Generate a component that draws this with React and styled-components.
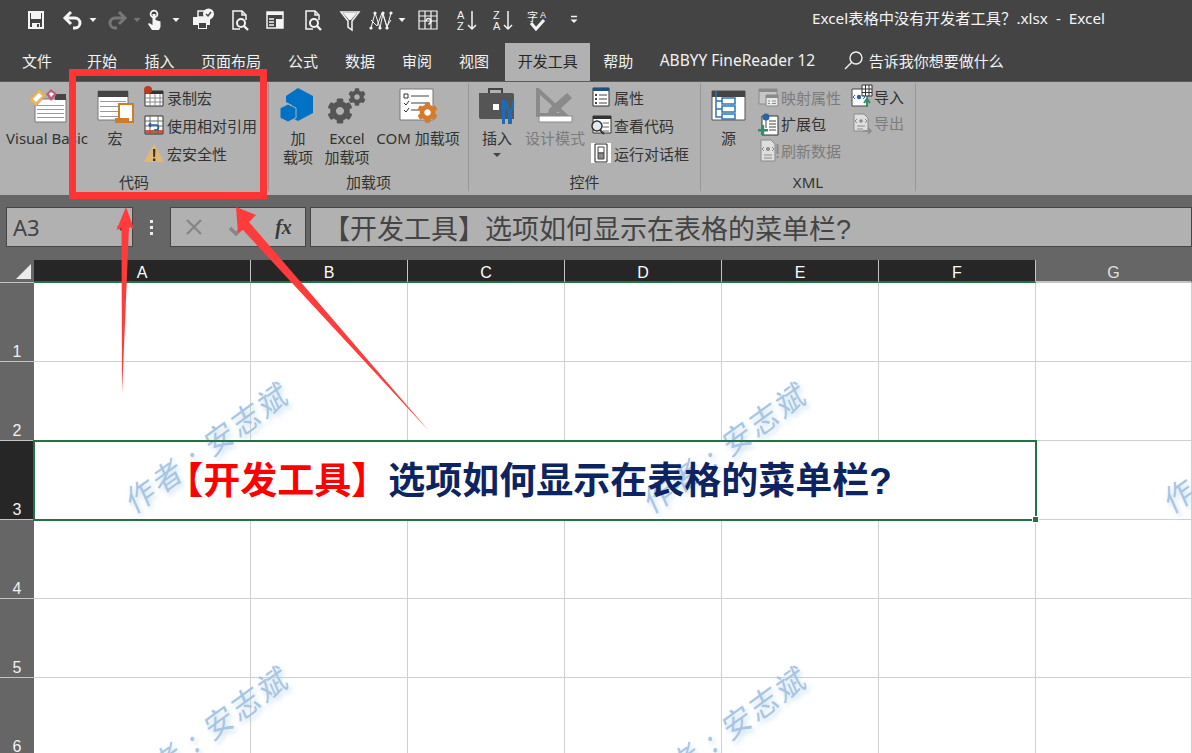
import React from 'react'
import styled, { createGlobalStyle } from 'styled-components'
import { FaCog } from 'react-icons/fa'

const GlobalStyle = createGlobalStyle`
  html, body { margin: 0; padding: 0; background: #fff; }
  body { font-family: "Noto Sans", "Noto Sans CJK SC", sans-serif; }
`

const Page = styled.div`
  position: relative;
  width: 1192px;
  height: 753px;
  overflow: hidden;
  display: flex;
  flex-direction: column;
`

/* ---------- title bar ---------- */
const TitleBar = styled.div`
  height: 43px;
  flex: none;
  box-sizing: border-box;
  background: #444;
  display: flex;
  align-items: center;
  padding: 0 0 3px 24px;
  color: #f2f2f2;
`
const QatIcon = styled.svg`
  flex: none;
  width: ${p => p.$w || 24}px;
  height: 24px;
  margin-left: ${p => p.$ml || 0}px;
  color: ${p => p.$off ? '#777' : '#f4f4f4'};
  fill: none;
  stroke: currentColor;
  stroke-width: 1.5;
`
const Title = styled.div`
  margin-left: auto;
  padding: 0 87px 6px 0;
  font-size: 15.3px;
  white-space: pre;
  color: #f4f4f4;
`

const Caret = ({ ml, off }) => (
  <QatIcon $w={10} $ml={ml} $off={off} viewBox="0 0 10 24">
    <path d="M1.5 10h7L5 14z" fill="currentColor" stroke="none" />
  </QatIcon>
)

const DocSearch = ({ ml }) => (
  <QatIcon $ml={ml} viewBox="0 0 24 24">
    <path d="M12 21H5V3h9l4 4v5" />
    <path d="M14 3v4h4" />
    <circle cx="13" cy="15" r="4" strokeWidth="2" />
    <path d="M16 18l4 4" strokeWidth="2.4" />
  </QatIcon>
)

const QuickAccess = () => (
  <>
    <QatIcon viewBox="0 0 24 24">
      <path d="M5 4h14v16H5z" strokeWidth="2" />
      <path d="M7 4h10v7H7zM8 15h8v5H8z" fill="currentColor" stroke="none" />
      <path d="M13 16h2v3h-2z" fill="#444" stroke="none" />
    </QatIcon>
    <QatIcon $ml={13} viewBox="0 0 24 24">
      <path d="M10 4L4 10l6 6M4 10h10a5 5 0 0 1 0 10h-2" strokeWidth="3" />
    </QatIcon>
    <Caret ml={3} />
    <QatIcon $ml={7} $off viewBox="0 0 24 24">
      <path d="M14 4l6 6-6 6M20 10H10a5 5 0 0 0 0 10h2" strokeWidth="3" />
    </QatIcon>
    <Caret ml={3} off />
    <QatIcon $ml={1} viewBox="0 0 24 24">
      <circle cx="11" cy="6" r="3.4" strokeWidth="1.8" />
      <path d="M9.5 6h3v6l5 1.5V19l-1.5 3H9l-4-6 1-1 3.5 2z" fill="currentColor" stroke="none" />
    </QatIcon>
    <Caret ml={4} />
    <QatIcon $ml={10} viewBox="0 0 24 24">
      <path d="M7 3h7v6H7z" />
      <path d="M2 9h17v8h-3v4H7v-4H2z" fill="currentColor" stroke="none" />
      <path d="M8 15h7v5H8z" fill="#444" stroke="none" />
      <circle cx="17.5" cy="6" r="5.5" fill="currentColor" stroke="none" />
      <path d="M15 6l2 2 3-4" stroke="#444" strokeWidth="1.4" />
    </QatIcon>
    <DocSearch ml={13} />
    <QatIcon $ml={11} viewBox="0 0 24 24">
      <path d="M4 4h16v16H4z" />
      <path d="M4 4h16v3H4z" fill="currentColor" stroke="none" />
      <path d="M6 11h5M6 14h5M6 17h5" />
      <path d="M13 11h7v9h-7z" fill="currentColor" stroke="none" />
    </QatIcon>
    <DocSearch ml={14} />
    <QatIcon $ml={13} viewBox="0 0 24 24">
      <path d="M3 4h18l-7 9v9l-4-3v-6z" />
      <path d="M5 5h14l-6 7h-2z" fill="currentColor" stroke="none" />
    </QatIcon>
    <QatIcon $ml={7} viewBox="0 0 24 24">
      <path d="M2 20L6 5l5 15 3-15 4 15 4-15M2 12l6 6 5-13 5 13 4-6" strokeWidth="1" />
      <g fill="currentColor" stroke="none">
        <circle cx="6" cy="5" r="1.6" /><circle cx="14" cy="5" r="1.6" /><circle cx="22" cy="5" r="1.6" />
        <circle cx="2" cy="20" r="1.6" /><circle cx="11" cy="20" r="1.6" /><circle cx="18" cy="20" r="1.6" />
      </g>
    </QatIcon>
    <Caret ml={4} />
    <QatIcon $ml={9} viewBox="0 0 24 24">
      <path d="M3 3h18v18H3zM3 8h18M3 13h18M9 3v18M15 3v18" strokeWidth="1.2" />
      <path d="M10 13a2.5 2.5 0 1 1 4 2l-1.5 1.5" strokeWidth="1.6" />
    </QatIcon>
    <QatIcon $ml={14} viewBox="0 0 24 24">
      <text x="3" y="11" fontSize="11" fontFamily="Liberation Sans" fill="currentColor" stroke="none">A</text>
      <text x="3" y="22" fontSize="11" fontFamily="Liberation Sans" fill="currentColor" stroke="none">Z</text>
      <path d="M18 3v18M14 17l4 4 4-4" />
    </QatIcon>
    <QatIcon $ml={12} viewBox="0 0 24 24">
      <text x="3" y="11" fontSize="11" fontFamily="Liberation Sans" fill="currentColor" stroke="none">Z</text>
      <text x="3" y="22" fontSize="11" fontFamily="Liberation Sans" fill="currentColor" stroke="none">A</text>
      <path d="M18 3v18M14 17l4 4 4-4" />
    </QatIcon>
    <QatIcon $ml={12} viewBox="0 0 24 24">
      <text x="1" y="13" fontSize="11" fontFamily="Noto Sans CJK SC" fill="currentColor" stroke="none">字</text>
      <text x="14" y="10" fontSize="9" fontFamily="Liberation Sans" fill="currentColor" stroke="none">A</text>
      <path d="M5 15l5 6 8-9" strokeWidth="3" />
    </QatIcon>
    <QatIcon $w={10} $ml={19} viewBox="0 0 10 24">
      <path d="M2 8.5h6" />
      <path d="M1.5 11.5h7L5 15z" fill="currentColor" stroke="none" />
    </QatIcon>
  </>
)

/* ---------- tabs ---------- */
const TabBar = styled.div`
  height: 38px;
  flex: none;
  box-sizing: border-box;
  background: #444;
  display: flex;
  align-items: stretch;
  padding-left: 8px;
  font-size: 15px;
  color: #f2f2f2;
`
const Tab = styled.div`
  display: flex;
  align-items: center;
  white-space: nowrap;
  padding: 0 ${p => p.$pad ?? 13.5}px 4px;
  margin-right: ${p => p.$mr || 0}px;
  font-size: ${p => p.$fs || 15}px;
  background: ${p => p.$active ? '#b1b1b1' : 'transparent'};
  color: ${p => p.$active ? '#262626' : 'inherit'};
`
const TellMe = styled.div`
  display: flex;
  align-items: center;
  gap: 3px;
  margin-left: 13px;
  padding-bottom: 4px;
  font-size: 15px;
`

/* ---------- ribbon ---------- */
const Ribbon = styled.div`
  height: 114px;
  flex: none;
  box-sizing: border-box;
  background: #b1b1b1;
  border-top: 1px solid #5a5a5a;
  padding: 1px 0 4px;
  display: flex;
  align-items: stretch;
  color: #333;
  font-size: 15px;
`
const Group = styled.div`
  box-sizing: border-box;
  width: ${p => p.$w}px;
  flex: none;
  border-right: 1px solid #969696;
  display: flex;
  flex-direction: column;
`
const GroupBody = styled.div`
  height: 90px;
  display: flex;
  align-items: flex-start;
  padding-left: ${p => p.$pl || 0}px;
`
const GroupLabel = styled.div`
  height: 18px;
  line-height: 18px;
  text-align: center;
  white-space: nowrap;
`
const LargeBtn = styled.div`
  flex: none;
  width: ${p => p.$w}px;
  display: flex;
  flex-direction: column;
  align-items: center;
  color: ${p => p.$off ? '#7c7c7c' : 'inherit'};
`
const LargeIcon = styled.div`
  height: 46px;
  display: flex;
  align-items: center;
  justify-content: center;
  position: relative;
`
const LargeText = styled.div`
  line-height: 19px;
  text-align: center;
  white-space: nowrap;
`
const SmallCol = styled.div`
  flex: none;
  display: flex;
  flex-direction: column;
  margin-left: ${p => p.$ml || 0}px;
  margin-top: ${p => p.$mt || 0}px;
`
const SmallBtn = styled.div`
  height: ${p => p.$h || 28}px;
  display: flex;
  align-items: center;
  white-space: nowrap;
  color: ${p => p.$off ? '#7c7c7c' : 'inherit'};
`
const SmallIcon = styled.svg`
  flex: none;
  width: 24px;
  height: 24px;
  margin-right: 1px;
`
const BigSvg = styled.svg`
  display: block;
  width: ${p => p.$w || 40}px;
  height: ${p => p.$h || 36}px;
`
const GearStack = styled.div`
  position: relative;
  width: 40px;
  height: 36px;
  color: #555;
`
const Gear = styled(FaCog)`
  position: absolute;
  left: ${p => p.$x}px;
  top: ${p => p.$y}px;
  font-size: ${p => p.$s}px;
  color: ${p => p.$c || 'inherit'};
`
const DropCaret = styled.div`
  width: 0;
  height: 0;
  margin-top: 5px;
  border: 4px solid transparent;
  border-top: 4px solid #444;
  border-bottom: 0;
`

const SheetLines = ({ x, y, w, n = 4, gap = 5 }) => (
  <g stroke="#999" strokeWidth="1">
    {Array.from({ length: n }).map((_, i) => (
      <path key={i} d={`M${x} ${y + i * gap + 0.5}h${w}`} />
    ))}
  </g>
)

/* ---------- formula bar ---------- */
const FormulaRow = styled.div`
  height: 65px;
  flex: none;
  background: #666;
  display: flex;
  align-items: flex-start;
  padding: 12px 0 0 6px;
  box-sizing: border-box;
`
const FieldBox = styled.div`
  box-sizing: border-box;
  height: 40px;
  background: #b1b1b1;
  border: 1px solid #464646;
  color: #444;
  display: flex;
  align-items: center;
  position: relative;
  flex: ${p => p.$grow ? '1' : 'none'};
  width: ${p => p.$w ? p.$w + 'px' : 'auto'};
  margin-left: ${p => p.$ml || 0}px;
`
const NameText = styled.span`
  font-size: 22px;
  margin-left: 6px;
`
const NameCaret = styled.div`
  position: absolute;
  right: 7px;
  top: 18px;
  border: 4px solid transparent;
  border-top: 5px solid #444;
  border-bottom: 0;
`
const Dots = styled.div`
  flex: none;
  width: 37px;
  height: 40px;
  display: flex;
  flex-direction: column;
  align-items: center;
  justify-content: center;
  gap: 3px;
  & > i {
    display: block;
    width: 3px;
    height: 3px;
    background: #eee;
  }
`
const FxSlot = styled.div`
  flex: none;
  width: 45px;
  display: flex;
  justify-content: center;
  align-items: center;
  color: #3a3a3a;
  font-family: "Liberation Serif", serif;
  font-style: italic;
  font-weight: 700;
  font-size: 20px;
`
const FormulaText = styled.div`
  margin-left: 12px;
  font-family: "Liberation Sans", "Noto Sans CJK SC", sans-serif;
  font-size: 27px;
  white-space: nowrap;
`

/* ---------- sheet ---------- */
const Sheet = styled.div`
  flex: none;
  display: grid;
  grid-template-columns: 34px 217px repeat(5, 157px) 156px;
  grid-template-rows: 23px repeat(6, 79px);
  font-family: "Liberation Sans", sans-serif;
  position: relative;
`
const Corner = styled.div`
  background: #666;
  border-bottom: 1px solid #c4c4c4;
  display: flex;
  align-items: flex-end;
  justify-content: flex-end;
  padding: 0 3px 3px 0;
  & > i {
    display: block;
    width: 0;
    height: 0;
    border-style: solid;
    border-width: 0 0 15px 15px;
    border-color: transparent transparent #ececec transparent;
  }
`
const ColHead = styled.div`
  box-sizing: border-box;
  background: ${p => p.$sel ? '#262626' : '#666'};
  color: ${p => p.$sel ? '#fff' : '#e0e0e0'};
  border-right: 1px solid ${p => p.$sel ? '#c4c4c4' : '#666'};
  border-bottom: 2px solid ${p => p.$sel ? '#217346' : '#c4c4c4'};
  font-size: 16px;
  line-height: 25px;
  text-align: center;
`
const RowHead = styled.div`
  box-sizing: border-box;
  background: ${p => p.$sel ? '#262626' : '#666'};
  border-bottom: 1px solid #c4c4c4;
  color: #f2f2f2;
  font-size: 16px;
  display: flex;
  align-items: flex-end;
  justify-content: center;
`
const Cell = styled.div`
  box-sizing: border-box;
  border-right: 1px solid #d0d0d0;
  border-bottom: 1px solid #d0d0d0;
  background: #fff;
`
const MergedCell = styled.div`
  grid-column: span 6;
  position: relative;
  z-index: 2;
  outline: 2px solid #217346;
  outline-offset: -1px;
  display: flex;
  align-items: center;
  justify-content: center;
  font-family: "Liberation Sans", "Noto Sans CJK SC", sans-serif;
  font-weight: 700;
  font-size: 37px;
  color: #0c2461;
  white-space: nowrap;
  padding: 0 12px 6px 0;
  box-sizing: border-box;
  &::after {
    content: '';
    position: absolute;
    right: -3px;
    bottom: -3px;
    width: 5px;
    height: 5px;
    background: #217346;
    border: 1px solid #fff;
  }
`
const RedText = styled.span`
  color: #f00;
`
const Watermark = styled.div`
  position: absolute;
  left: ${p => p.$x}px;
  top: ${p => p.$y}px;
  transform: translate(-50%, -50%) rotate(-36deg) skewX(-12deg);
  z-index: 1;
  font-family: "Noto Sans CJK SC", sans-serif;
  font-size: 30px;
  letter-spacing: 3px;
  white-space: pre;
  color: #a6c6e4;
  text-shadow: 1px 4px 5px rgba(170, 200, 230, 0.6);
`

/* ---------- annotations over the picture ---------- */
const RedFrame = styled.div`
  position: absolute;
  left: 69px;
  top: 69px;
  width: 198px;
  height: 130px;
  box-sizing: border-box;
  border: 7px solid #ff3535;
`
const Arrows = styled.svg`
  position: absolute;
  left: 0;
  top: 0;
  width: 1192px;
  height: 753px;
  z-index: 3;
  pointer-events: none;
`

const columns = ['A', 'B', 'C', 'D', 'E', 'F']
const rows = [1, 2, 3, 4, 5, 6]
const marks = [[207, 185], [725, 185], [1245, 185], [207, 469], [725, 469]]

export default function App() {
  return (
    <Page>
      <GlobalStyle />
      <TitleBar>
        <QuickAccess />
        <Title>Excel表格中没有开发者工具？.xlsx  -  Excel</Title>
      </TitleBar>

      <TabBar>
        <Tab $pad={14} $mr={7}>文件</Tab>
        <Tab $pad={14} $mr={-0.5}>开始</Tab>
        <Tab $pad={14} $mr={-1}>插入</Tab>
        <Tab>页面布局</Tab>
        <Tab>公式</Tab>
        <Tab>数据</Tab>
        <Tab>审阅</Tab>
        <Tab $mr={2.5}>视图</Tab>
        <Tab $active $pad={12.5}>开发工具</Tab>
        <Tab $pad={13}>帮助</Tab>
        <Tab $fs={15.5}>ABBYY FineReader 12</Tab>
        <TellMe>
          <svg width="24" height="24" viewBox="0 0 24 24" fill="none" stroke="#f2f2f2" strokeWidth="1.4">
            <circle cx="14" cy="10" r="6" />
            <path d="M9.5 14.5L3 21" />
          </svg>
          告诉我你想要做什么
        </TellMe>
      </TabBar>

      <Ribbon>
        <Group $w={269}>
          <GroupBody>
            <LargeBtn $w={94}>
              <LargeIcon>
                <BigSvg viewBox="0 0 40 36">
                  <path d="M8 15h31v23H8z" transform="translate(0,-4)" fill="#fff" stroke="#777" />
                  <path d="M28 6h11v6H28z" fill="#444" />
                  <SheetLines x={10} y={17} w={27} n={4} gap={4} />
                  <path d="M2 12L12 1l7 6-10 11z" fill="#e2b96a" stroke="#d9a64e" />
                  <path d="M6 11l6-6 3 3-6 6z" fill="#fff" />
                  <path d="M19 6l5-5 6 5-6 7z" fill="#c45c76" />
                  <path d="M22 6l2-2 3 2-3 3z" fill="#fff" />
                </BigSvg>
              </LargeIcon>
              <LargeText>Visual Basic</LargeText>
            </LargeBtn>
            <LargeBtn $w={42}>
              <LargeIcon>
                <BigSvg viewBox="0 0 40 36">
                  <path d="M3 3h30v29H3z" fill="#fff" stroke="#777" />
                  <path d="M3 3h30v6H3z" fill="#444" />
                  <SheetLines x={5} y={13} w={26} n={4} gap={5} />
                  <path d="M24 16h14v18H24z" fill="#fff" stroke="#d07a2c" strokeWidth="2" />
                  <path d="M20 30h14v5H20z" fill="#d07a2c" />
                </BigSvg>
              </LargeIcon>
              <LargeText>宏</LargeText>
            </LargeBtn>
            <SmallCol $ml={6}>
              <SmallBtn>
                <SmallIcon viewBox="0 0 24 24">
                  <path d="M3 6h18v15H3z" fill="#fff" stroke="#333" />
                  <path d="M3 6h18v3H3z" fill="#333" />
                  <path d="M3 13h18M3 17h18M8 9v12M13 9v12M18 9v12" stroke="#888" />
                  <circle cx="6" cy="5" r="4" fill="#c0391b" />
                </SmallIcon>
                录制宏
              </SmallBtn>
              <SmallBtn>
                <SmallIcon viewBox="0 0 24 24">
                  <path d="M3 3h18v18H3z" fill="#fff" stroke="#333" />
                  <path d="M3 8h18M3 13h18M8 3v18M16 3v18" stroke="#666" />
                  <path d="M3 17h18v4H3z" fill="#b5402a" opacity=".85" />
                  <path d="M9 10l-2 2 2 2M7 12h7a2 2 0 0 1 0 5h-2" fill="none" stroke="#1d5fa8" strokeWidth="1.5" />
                </SmallIcon>
                使用相对引用
              </SmallBtn>
              <SmallBtn>
                <SmallIcon viewBox="0 0 24 24">
                  <path d="M12 3l10 18H2z" fill="#e3b771" />
                  <path d="M11 8h2.4l-.3 8h-1.8zM11 17.5h2.4V20H11z" fill="#333" />
                </SmallIcon>
                宏安全性
              </SmallBtn>
            </SmallCol>
          </GroupBody>
          <GroupLabel>代码</GroupLabel>
        </Group>

        <Group $w={200}>
          <GroupBody $pl={6}>
            <LargeBtn $w={46}>
              <LargeIcon>
                <BigSvg viewBox="0 0 40 36">
                  <path d="M20 0l15 8v17l-15 8-6-3V17l-6-3V8z" fill="#0072c6" />
                  <path d="M10 16l8 4v10l-8 4-8-4V20z" fill="#0072c6" stroke="#b1b1b1" />
                </BigSvg>
              </LargeIcon>
              <LargeText>加<br />载项</LargeText>
            </LargeBtn>
            <LargeBtn $w={52}>
              <LargeIcon>
                <GearStack>
                  <Gear $x={0} $y={10} $s={26} />
                  <Gear $x={21} $y={0} $s={18} />
                </GearStack>
              </LargeIcon>
              <LargeText>Excel<br />加载项</LargeText>
            </LargeBtn>
            <LargeBtn $w={90}>
              <LargeIcon>
                <GearStack>
                  <BigSvg viewBox="0 0 40 36">
                    <path d="M2 1h33v31H2z" fill="#fff" stroke="#777" />
                    <path d="M6 6h4v4H6z" fill="none" stroke="#333" />
                    <path d="M13 8h18M13 15h18M13 22h8" stroke="#444" />
                    <path d="M6 15l2 2 3-4M6 22l2 2 3-4" fill="none" stroke="#333" />
                  </BigSvg>
                  <Gear $x={19} $y={14} $s={21} $c="#d67a2c" />
                </GearStack>
              </LargeIcon>
              <LargeText>COM 加载项</LargeText>
            </LargeBtn>
          </GroupBody>
          <GroupLabel>加载项</GroupLabel>
        </Group>

        <Group $w={232}>
          <GroupBody>
            <LargeBtn $w={56}>
              <LargeIcon>
                <BigSvg viewBox="0 0 40 36">
                  <path d="M12 5V1h13v4" fill="none" stroke="#444" strokeWidth="2" />
                  <path d="M2 5h33a2 2 0 0 1 2 2v24H4a2 2 0 0 1-2-2z" fill="#555" />
                  <path d="M16 16h6v6h-6z" fill="#fff" />
                  <path d="M24 18h5v3h-1v15h-3V21h-1zM25 12h3v6h-3z" fill="#1d6cb5" />
                  <path d="M31 22h4v14h-4z" fill="#1d6cb5" />
                  <path d="M30 13v6a3 3 0 0 0 6 0v-6" fill="none" stroke="#1d6cb5" strokeWidth="2.2" />
                </BigSvg>
              </LargeIcon>
              <LargeText>插入</LargeText>
              <DropCaret />
            </LargeBtn>
            <LargeBtn $w={60} $off>
              <LargeIcon>
                <BigSvg viewBox="0 0 40 36">
                  <path d="M3 2v25h27z" fill="none" stroke="#8a8a8a" strokeWidth="4" />
                  <path d="M14 21L32 5l5 5-17 16-7 2z" fill="#8a8a8a" />
                  <path d="M4 28h33v6H4z" fill="#fff" stroke="#8a8a8a" />
                </BigSvg>
              </LargeIcon>
              <LargeText>设计模式</LargeText>
            </LargeBtn>
            <SmallCol $ml={4}>
              <SmallBtn>
                <SmallIcon viewBox="0 0 24 24">
                  <path d="M4 3h16v18H4z" fill="#fff" stroke="#333" />
                  <path d="M4 3h16v3H4z" fill="#1d4f86" />
                  <path d="M10 10h8M10 14h8M10 18h8" stroke="#444" />
                  <path d="M6 9h2v2H6zM6 13h2v2H6zM6 17h2v2H6z" fill="#444" />
                </SmallIcon>
                属性
              </SmallBtn>
              <SmallBtn>
                <SmallIcon viewBox="0 0 24 24">
                  <path d="M4 3h18v17H4z" fill="#fff" stroke="#333" />
                  <path d="M4 3h18v3H4z" fill="#333" />
                  <path d="M14 10h6M14 14h6M14 18h6" stroke="#666" />
                  <circle cx="8" cy="13" r="5" fill="#dfe9f2" stroke="#333" strokeWidth="1.5" />
                  <path d="M11 17l4 4" stroke="#333" strokeWidth="2" />
                </SmallIcon>
                查看代码
              </SmallBtn>
              <SmallBtn>
                <SmallIcon viewBox="0 0 24 24">
                  <path d="M2 2h20v20H2z" fill="#fff" />
                  <path d="M6 3h12v18H6z" fill="#fff" stroke="#222" />
                  <path d="M9 6h6v6H9z" fill="#fff" stroke="#444" />
                  <path d="M9 12h6v6H9z" fill="#888" stroke="#444" />
                </SmallIcon>
                运行对话框
              </SmallBtn>
            </SmallCol>
          </GroupBody>
          <GroupLabel>控件</GroupLabel>
        </Group>

        <Group $w={215}>
          <GroupBody>
            <LargeBtn $w={55}>
              <LargeIcon>
                <BigSvg viewBox="0 0 40 36">
                  <path d="M3 3h33v29H3z" fill="#fff" stroke="#555" />
                  <path d="M3 3h33v6H3z" fill="#444" />
                  <path d="M7 3v26h6M7 13h6M7 21h6" fill="none" stroke="#2e75b6" strokeWidth="1.5" />
                  <path d="M13 10h13v6H13zM13 18h13v6H13zM13 26h13v5H13z" fill="#fff" stroke="#2e75b6" strokeWidth="1.5" />
                </BigSvg>
              </LargeIcon>
              <LargeText>源</LargeText>
            </LargeBtn>
            <SmallCol $mt={1}>
              <SmallBtn $h={26.5} $off>
                <SmallIcon viewBox="0 0 24 24">
                  <path d="M3 4h18v15H3z" fill="#c6c6c6" stroke="#8a8a8a" />
                  <path d="M3 4h18v3H3z" fill="#8a8a8a" />
                  <path d="M10 10h12v11H10z" fill="#e8e8e8" stroke="#8a8a8a" />
                  <path d="M10 10h12v3H10z" fill="#8a8a8a" />
                  <path d="M12 16h2M16 16h4M12 18.5h2M16 18.5h4" stroke="#8a8a8a" />
                </SmallIcon>
                映射属性
              </SmallBtn>
              <SmallBtn $h={26.5}>
                <SmallIcon viewBox="0 0 24 24">
                  <path d="M6 4h16v19H6z" fill="#fff" stroke="#333" />
                  <path d="M13 9h7M13 12h7M13 15h7M13 18h7" stroke="#444" />
                  <path d="M10 6v10" stroke="#444" />
                  <circle cx="10" cy="5" r="3.5" fill="#2563a8" />
                  <path d="M2 17h10v2.4H2zM5.8 13h2.4v10H5.8z" fill="#2f8f6a" />
                </SmallIcon>
                扩展包
              </SmallBtn>
              <SmallBtn $h={26.5} $off>
                <SmallIcon viewBox="0 0 24 24">
                  <path d="M5 2h10l4 4v17H5z" fill="#dedede" stroke="#8a8a8a" />
                  <path d="M8 17h8M8 20h8" stroke="#8a8a8a" />
                  <circle cx="12" cy="11" r="2" fill="#8a8a8a" />
                  <path d="M8 9l-2 2 2 2M16 9l2 2-2 2" fill="none" stroke="#8a8a8a" />
                  <path d="M20.5 6h2v10h-2zM20.5 18h2v2h-2z" fill="#8a8a8a" />
                </SmallIcon>
                刷新数据
              </SmallBtn>
            </SmallCol>
            <SmallCol $ml={8}>
              <SmallBtn $h={26.5}>
                <SmallIcon viewBox="0 0 24 24">
                  <path d="M3 5h12l3 3v14H3z" fill="#fff" stroke="#444" />
                  <path d="M13 1h10v11H13z" fill="#fff" stroke="#333" />
                  <path d="M13 5h10M13 8.5h10M16.5 1v11M20 1v11" stroke="#333" />
                  <circle cx="10" cy="13" r="2.2" fill="#2563a8" />
                  <path d="M6 11l-2 2 2 2M14 11l2 2-2 2" fill="none" stroke="#2563a8" />
                  <path d="M18 23v-7m-3 3l3-4 3 4" fill="none" stroke="#2f8f6a" strokeWidth="2" />
                </SmallIcon>
                导入
              </SmallBtn>
              <SmallBtn $h={26.5} $off>
                <SmallIcon viewBox="0 0 24 24">
                  <path d="M5 3h10l4 4v13H5z" fill="#dedede" stroke="#8a8a8a" />
                  <circle cx="12" cy="10" r="1.8" fill="#8a8a8a" />
                  <path d="M8 8l-2 2 2 2M16 8l2 2-2 2M8 15h8M8 18h6" fill="none" stroke="#8a8a8a" />
                  <path d="M14 20h8m-3-3l3 3-3 3" fill="none" stroke="#8a8a8a" strokeWidth="1.6" />
                </SmallIcon>
                导出
              </SmallBtn>
            </SmallCol>
          </GroupBody>
          <GroupLabel>XML</GroupLabel>
        </Group>
      </Ribbon>

      <FormulaRow>
        <FieldBox $w={127}>
          <NameText>A3</NameText>
          <NameCaret />
        </FieldBox>
        <Dots><i /><i /><i /></Dots>
        <FieldBox $w={136}>
          <FxSlot>
            <svg width="22" height="22" viewBox="0 0 22 22" fill="none" stroke="#868686" strokeWidth="2.4">
              <path d="M4 4l14 14M18 4L4 18" />
            </svg>
          </FxSlot>
          <FxSlot>
            <svg width="24" height="22" viewBox="0 0 24 22" fill="none" stroke="#868686" strokeWidth="3.4">
              <path d="M3 12l6 6L22 4" />
            </svg>
          </FxSlot>
          <FxSlot>fx</FxSlot>
        </FieldBox>
        <FieldBox $grow $ml={4}>
          <FormulaText>【开发工具】选项如何显示在表格的菜单栏?</FormulaText>
        </FieldBox>
      </FormulaRow>

      <Sheet>
        <Corner><i /></Corner>
        {columns.map(c => <ColHead key={c} $sel>{c}</ColHead>)}
        <ColHead>G</ColHead>
        {rows.map(r => (
          <React.Fragment key={r}>
            <RowHead $sel={r === 3}>{r}</RowHead>
            {r === 3 ? (
              <MergedCell>
                <RedText>【开发工具】</RedText>选项如何显示在表格的菜单栏?
              </MergedCell>
            ) : (
              columns.map(c => <Cell key={c} />)
            )}
            <Cell />
          </React.Fragment>
        ))}
        {marks.map(([x, y]) => (
          <Watermark key={`${x}-${y}`} $x={x} $y={y}>作者 : 安志斌</Watermark>
        ))}
      </Sheet>

      <RedFrame />
      <Arrows viewBox="0 0 1192 753">
        <path d="M122 394L121.5 228 116.5 230 126 207 134 229 129 227z" fill="#ff3b3b" />
        <path d="M236 207L256 215 249 222 429 431 243 230 238 233z" fill="#ff3b3b" />
      </Arrows>
    </Page>
  )
}
